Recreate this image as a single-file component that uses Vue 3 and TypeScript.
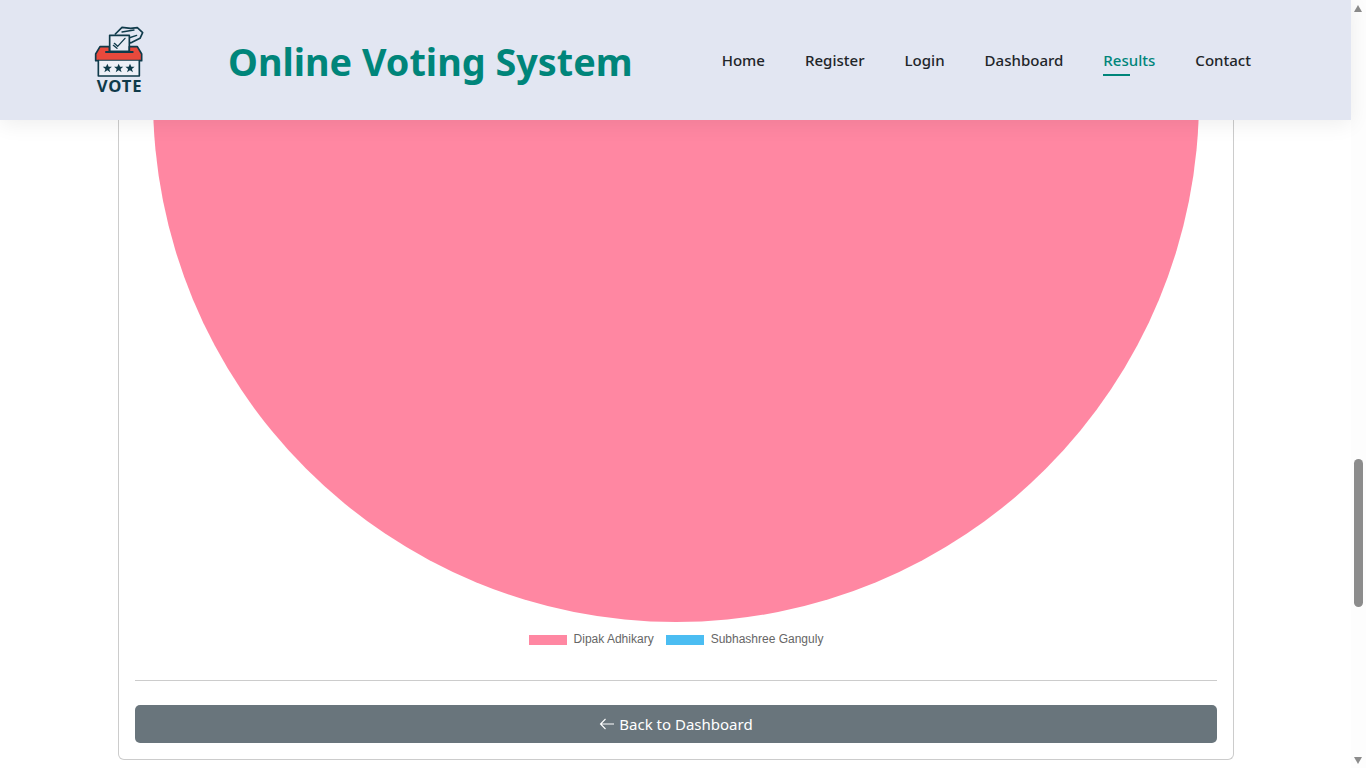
<script setup lang="ts">
interface NavItem { label: string; active?: boolean }
const nav: NavItem[] = [
  { label: 'Home' },
  { label: 'Register' },
  { label: 'Login' },
  { label: 'Dashboard' },
  { label: 'Results', active: true },
  { label: 'Contact' },
]
const legend = [
  { label: 'Dipak Adhikary', color: '#ff87a2' },
  { label: 'Subhashree Ganguly', color: '#4bbdf2' },
]
const stars = [82, 116, 150]
</script>

<template>
  <div class="page">
    <div class="main">
      <header class="header">
        <svg class="logo" viewBox="0 0 270 300" aria-label="Vote logo">
          <g fill="none" stroke="#0f3a4a" stroke-width="5" stroke-linejoin="round" stroke-linecap="round">
            <path d="M106 72l20-20 26 3 20-2 16 15-8 17-24 12-12 3" fill="#e2e6f2" />
            <path d="M126 66l36-6M146 84l24-8" stroke-width="4" />
            <rect x="89" y="76" width="59" height="50" fill="#e8ebf4" />
            <path d="M103 100l10 9 22-24M100 106l11 9" stroke-width="4" />
            <path d="M60 110H88V124H148V110H172L185 132V152H47V132Z" fill="#e8493c" />
            <path d="M78 126H158" stroke-width="6" />
            <path d="M55 152V198H178V152" fill="#eef0f7" />
          </g>
          <path
            v-for="x in stars"
            :key="x"
            fill="#0f3a4a"
            :transform="`translate(${x} 175) scale(1.150)`"
            d="M0-12l3.500 8h8.500l-7 5.500 2.700 8.500-7.700-5-7.700 5 2.700-8.500-7-5.500h8.500z"
          />
          <text x="119" y="245" text-anchor="middle" class="logo-text">VOTE</text>
        </svg>
        <h1 class="title">Online Voting System</h1>
        <nav class="nav">
          <a v-for="item in nav" :key="item.label" class="nav-link" :class="{ active: item.active }">{{ item.label }}</a>
        </nav>
      </header>
      <section class="content">
        <div class="card">
          <svg class="chart" viewBox="0 0 1082 502">
            <circle cx="541" cy="-21" r="523" fill="#ff87a2" />
          </svg>
          <div class="legend">
            <span v-for="l in legend" :key="l.label" class="legend-item">
              <i class="swatch" :style="{ background: l.color }"></i>{{ l.label }}
            </span>
          </div>
          <hr class="rule" />
          <button class="back" type="button">
            <svg class="back-icon" viewBox="0 0 16 16" width="16" height="16">
              <path d="M15 8H1.500M6.500 3L1.500 8l5 5" fill="none" stroke="#fff" stroke-width="1.100" />
            </svg>
            <span>Back to Dashboard</span>
          </button>
        </div>
      </section>
    </div>
    <aside class="scrollbar">
      <span class="arrow up"></span>
      <span class="thumb"></span>
      <span class="arrow down"></span>
    </aside>
  </div>
</template>

<style>
html, body { margin: 0; height: 100%; overflow: hidden; background: #fff; }
</style>

<style scoped>
.page { display: flex; width: 1366px; height: 768px; overflow: hidden; font-family: "Noto Sans", "Open Sans", sans-serif; }
.main { width: 1351px; display: flex; flex-direction: column; }
.header {
  position: relative; z-index: 2; height: 120px; flex: none; display: flex; align-items: center;
  background: #e2e6f2; box-shadow: 0 4px 20px rgba(0, 0, 0, 0.07);
  padding: 0 100px 0 80px;
}
.logo { width: 90px; height: 100px; flex: none; }
.logo-text { font: 700 50px "Noto Sans", sans-serif; letter-spacing: 2.500px; fill: #0f3a4a; }
.title { margin: 2px 0 0 58px; font-size: 37.800px; font-weight: 700; color: #00857a; white-space: nowrap; }
.nav { margin-left: auto; display: flex; gap: 40px; }
.nav-link { position: relative; font-size: 15.040px; font-weight: 500; color: #212529; line-height: 24px; }
.nav-link.active { color: #00857a; }
.nav-link.active::after { content: ""; position: absolute; left: 0; bottom: -4px; width: 27px; height: 2px; background: #00857a; }
.content { flex: 1; padding: 0 117px 8px 118px; display: flex; min-height: 0; }
.card {
  flex: 1; border: 1px solid #ccc; border-top: none; border-radius: 0 0 6px 6px;
  padding: 0 16px 16px; display: flex; flex-direction: column;
}
.chart { display: block; width: 1082px; height: 502px; flex: none; }
.legend { display: flex; justify-content: center; gap: 12px; height: 58px; padding-top: 10px; box-sizing: border-box;
  font: 12px/14px "Liberation Sans", sans-serif; color: #666; }
.legend-item { display: inline-flex; align-items: flex-start; }
.swatch { width: 38px; height: 10px; margin: 3px 7px 0 0; }
.rule { margin: 0; border: none; border-top: 1px solid #ccc; }
.back {
  margin-top: 24px; height: 38px; border: none; border-radius: 5px; background: #69757c; color: #fff;
  font: 400 15px "Noto Sans", sans-serif; padding: 0; display: flex; align-items: center; justify-content: center; gap: 4px;
}
.back-icon { flex: none; margin-top: -1px; }
.scrollbar { width: 15px; flex: none; background: #fdfdfd; position: relative; }
.thumb { position: absolute; top: 459px; left: 3px; width: 9px; height: 148px; border-radius: 5px; background: #8c8c8c; }
.arrow { position: absolute; left: 3px; width: 0; height: 0; border-left: 4.5px solid transparent; border-right: 4.5px solid transparent; }
.arrow.up { top: 5px; border-bottom: 7px solid #8c8c8c; }
.arrow.down { top: 757px; border-top: 7px solid #8c8c8c; }
</style>
